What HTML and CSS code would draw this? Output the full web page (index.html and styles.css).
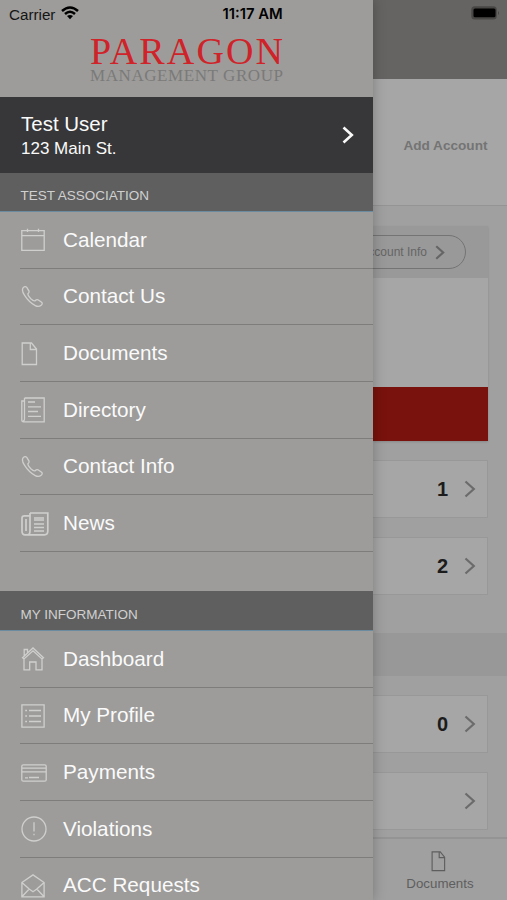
FILE: index.html
```html
<!doctype html>
<html lang="en">
<head>
<meta charset="utf-8">
<title>Paragon Management Group</title>
<link rel="stylesheet" href="styles.css">
</head>
<body>
<svg class="defs">
    <symbol id="phone" viewBox="0 0 24 24"><path d="M2.2 2.6 Q4.2 .6 5.8 2.4 L8 6.1 Q8.4 7.5 6.9 8.8 Q6.6 10.4 9.8 13.7 Q12.6 16.4 14.1 15.8 Q15.6 14.2 17 14.8 L20.6 17.3 Q22 18.8 20.2 20.2 Q17.7 22.4 14.3 20.6 Q8.2 17.5 3.6 10.4 Q.2 5.4 2.2 2.6Z"/></symbol>
    <symbol id="doc" viewBox="0 0 24 24"><path d="M1.2 1H10.5L15.5 7V22.5H1.2ZM9.3 1V7.5H15.5"/></symbol>
    <symbol id="arrow" viewBox="0 0 12 18"><path d="M1.5 1.5L9.8 9L1.5 16.5"/></symbol>
</svg>
<div class="app">
    <nav class="drawer">
        <header class="top">
            <div class="status">
                <span>Carrier</span>
                <svg class="wifi" width="18" height="14" viewBox="0 0 18 14"><path d="M1 5Q9 -2 17 5M4 8Q9 3.5 14 8"/><path class="dot" d="M6 10Q9 7.8 12 10L9 13.2Z"/></svg>
                <span class="time">11:17 AM</span>
            </div>
            <svg class="logo" width="200" height="60" viewBox="0 0 200 60">
                <text class="name" x="4" y="36" textLength="193" lengthAdjust="spacing">PARAGON</text>
                <text class="sub" x="4" y="53" textLength="193" lengthAdjust="spacing">MANAGEMENT GROUP</text>
            </svg>
        </header>
        <div class="user">
            <div>
                <div class="username">Test User</div>
                <div class="address">123 Main St.</div>
            </div>
            <svg class="arrow" width="12" height="18"><use href="#arrow"/></svg>
        </div>
        <h2 class="section">TEST ASSOCIATION</h2>
        <ul class="menu first">
            <li><svg class="icon" viewBox="0 0 24 24"><path d="M.8 2.6H23.2V22.4H.8ZM.8 7.6H23.2M6.5 .8V4M17.5 .8V4"/></svg>Calendar</li>
            <li><svg class="icon"><use href="#phone"/></svg>Contact Us</li>
            <li><svg class="icon"><use href="#doc"/></svg>Documents</li>
            <li><svg class="icon tall" viewBox="0 0 24 26"><path d="M3.5 1H23.2V24.8H2.5Q.8 24.8 .8 23V4H3.5V1V22Q3.5 24 2 24M7 5H14M7 9.8H20M7 14.5H17M7 19.3H20"/></svg>Directory</li>
            <li><svg class="icon"><use href="#phone"/></svg>Contact Info</li>
            <li><svg class="icon news" viewBox="0 0 28 24"><path d="M9 1H26.8V19Q26.8 22.8 23.5 22.8H4Q1 22.8 1 19V6Q1 3.8 3.5 3.8H9M9 1V19Q9 22.8 6.5 22.8M5 7V19M13 6H23M13 8H23M13 12H23M13 15.5H23M13 19H23"/></svg>News</li>
        </ul>
        <h2 class="section info">MY INFORMATION</h2>
        <ul class="menu">
            <li><svg class="icon" viewBox="0 0 24 24"><path d="M1.5 10.7L12 1L22.5 10.7L21 12L12 3.8L3 12ZM3 12V22.8H8.7V15H15V22.8H21V12M3.2 9V2.5H6.5V6"/></svg>Dashboard</li>
            <li><svg class="icon" viewBox="0 0 24 24"><path d="M.9 .9H23.1V23.1H.9ZM8 6.5H20M8 12H20M8 17.5H20M4.2 6.5H6M4.2 12H6M4.2 17.5H6"/></svg>My Profile</li>
            <li><svg class="icon card" viewBox="0 0 26 18"><rect x=".8" y=".8" width="24.4" height="16.4" rx="1.5"/><path d="M1 4.2H25M1 7.8H25M4 13.8H7M8 13.5H18"/></svg>Payments</li>
            <li><svg class="icon alert" viewBox="0 0 26 26"><circle cx="13" cy="13" r="12"/><path d="M13 6.3V15.5M13 17.7V19.3"/></svg>Violations</li>
            <li><svg class="icon" viewBox="0 0 24 24"><path d="M.9 8.5L12 .9L23.1 8.5V22.8H.9ZM.9 8.5L8.2 15L12 17.7L15.8 15L23.1 8.5M.9 22.8L8.2 15M23.1 22.8L15.8 15"/></svg>ACC Requests</li>
        </ul>
    </nav>
    <main class="page">
        <header class="bar">
            <svg width="29" height="14" viewBox="0 0 29 14"><rect class="case" x=".3" y=".3" width="25.5" height="13.2" rx="3.5"/><rect x="2.5" y="2.5" width="22" height="8.7" rx="1.5"/><path class="tip" d="M27 5Q29 7 27 9Z"/></svg>
        </header>
        <div class="account">Add Account</div>
        <div class="content">
            <div class="panel">
                <div class="panel-head">
                    <div class="pill">Account Info <svg class="arrow" width="10" height="15"><use href="#arrow"/></svg></div>
                </div>
                <div class="panel-body"></div>
                <div class="pay"></div>
            </div>
            <div class="row">1<svg class="arrow" width="12" height="18"><use href="#arrow"/></svg></div>
            <div class="row">2<svg class="arrow" width="12" height="18"><use href="#arrow"/></svg></div>
        </div>
        <div class="band"></div>
        <div class="content lower">
            <div class="row">0<svg class="arrow" width="12" height="18"><use href="#arrow"/></svg></div>
            <div class="row"><svg class="arrow" width="12" height="18"><use href="#arrow"/></svg></div>
        </div>
        <footer class="tabs">
            <svg class="tab-icon" viewBox="0 0 17 24"><use href="#doc" width="24" height="24"/></svg>
            Documents
        </footer>
    </main>
</div>
</body>
</html>
```

FILE: styles.css
```css
*{
    box-sizing: border-box;
}
body{
    margin: 0;
    font-family: "Liberation Sans", Arial, sans-serif;
    background-color: #a0a0a0;
}
svg{
    fill: none;
    stroke: currentColor;
    flex-shrink: 0;
}
.defs{
    display: none;
}
.app{
    display: flex;
    width: 507px;
    height: 900px;
    overflow: hidden;
}

/* drawer */
.drawer{
    position: relative;
    width: 373px;
    flex-shrink: 0;
    height: 900px;
    overflow: hidden;
    background-color: #9d9c9a;
    color: #fafafa;
    box-shadow: 0 0 12px rgba(0, 0, 0, 0.25);
    z-index: 1;
}
.top{
    height: 97px;
    color: #151515;
}
.status{
    display: flex;
    align-items: center;
    height: 28px;
    padding-left: 9px;
    font-size: 15.2px;
}
.wifi{
    margin-left: 6px;
    margin-top: -3px;
    stroke: #000;
    stroke-width: 2.5;
}
.wifi .dot{
    fill: #000;
    stroke: none;
}
.time{
    margin-left: 143px;
    margin-top: -1px;
    font-family: Inter, sans-serif;
    font-size: 14.8px;
    font-weight: 600;
    color: #000;
}
.logo{
    display: block;
    margin: 0 0 0 86px;
    overflow: visible;
    font-family: "Liberation Serif", serif;
    stroke: none;
}
.name{
    font-size: 38px;
    fill: #cf2329;
}
.sub{
    font-size: 17px;
    fill: #7a7a79;
}
.user{
    display: flex;
    align-items: center;
    justify-content: space-between;
    height: 76px;
    padding: 0 19px 0 21px;
    background-color: #373739;
}
.username{
    font-size: 20.5px;
    line-height: 27px;
}
.address{
    font-size: 17px;
    line-height: 24px;
}
.arrow{
    stroke-width: 2.6;
}
.section{
    margin: 0;
    height: 39px;
    padding-left: 20.5px;
    border-bottom: 1px solid #6a8ba0;
    background-color: #5f5f5f;
    color: #d0d0d0;
    font-size: 13.5px;
    font-weight: normal;
    line-height: 45px;
}
.info{
    height: 40px;
    line-height: 47px;
}
.menu{
    margin: 0;
    padding: 0 0 0 20px;
    list-style: none;
}
.first{
    height: 379px;
}
.menu li{
    display: flex;
    align-items: center;
    height: 56.67px;
    border-bottom: 1.5px solid #7e7d7b;
    font-size: 20.7px;
}
.icon{
    width: 24px;
    height: 24px;
    margin: 1px 18px 0 1px;
    color: #cfcfce;
    stroke-width: 1.3;
}
.tall{
    height: 26px;
}
.news{
    width: 28px;
    margin-right: 14px;
    stroke-width: 1.7;
}
.card{
    width: 26px;
    height: 18px;
    margin-right: 16px;
}
.alert{
    width: 26px;
    height: 26px;
    margin-right: 16px;
}

/* page behind the drawer */
.page{
    display: flex;
    flex-direction: column;
    width: 134px;
    background-color: #a0a0a0;
    color: #656565;
}
.bar{
    display: flex;
    justify-content: flex-end;
    height: 79px;
    padding: 6px 7px 0 0;
    background-color: #656462;
}
.bar svg{
    fill: #000;
    stroke: none;
}
.bar .case,
.bar .tip{
    fill: #484745;
}
.account{
    height: 127px;
    padding-right: 19.5px;
    border-bottom: 1px solid #949494;
    background-color: #a6a6a6;
    color: #747474;
    font-size: 13.6px;
    font-weight: bold;
    line-height: 134px;
    text-align: right;
}
.content{
    height: 427px;
    padding: 20px 19px 0 0;
}
.panel{
    height: 215px;
    margin-bottom: 19px;
    box-shadow: 0 1px 2px rgba(0, 0, 0, 0.15);
}
.panel-head{
    display: flex;
    justify-content: flex-end;
    align-items: center;
    height: 52px;
    padding-right: 22px;
    background-color: #999;
}
.pill{
    display: flex;
    align-items: center;
    justify-content: flex-end;
    flex-shrink: 0;
    gap: 8px;
    width: 150px;
    height: 34px;
    padding-right: 20px;
    border: 1.5px solid #747474;
    border-radius: 17px;
    font-size: 12px;
}
.panel-body{
    height: 109px;
    background-color: #a6a6a6;
}
.pay{
    height: 54px;
    background-color: #79120c;
}
.row{
    display: flex;
    justify-content: flex-end;
    align-items: center;
    gap: 16px;
    height: 58px;
    margin-bottom: 19px;
    padding-right: 11px;
    border: 1px solid #989898;
    border-left: 0;
    background-color: #a6a6a6;
    color: #1c1c1c;
    font-size: 20px;
    font-weight: bold;
}
.row .arrow{
    color: #6b6b6b;
    stroke-width: 2.2;
}
.band{
    height: 43px;
    background-color: #989898;
}
.lower{
    height: 161px;
    padding-top: 19px;
}
.tabs{
    display: flex;
    flex-direction: column;
    align-items: center;
    height: 63px;
    padding-top: 12px;
    border-top: 2px solid #949494;
    font-size: 13.3px;
    color: #5e5e5e;
}
.tab-icon{
    width: 15px;
    height: 21px;
    margin: 0 4px 4px 0;
    stroke-width: 1.3;
}
```
